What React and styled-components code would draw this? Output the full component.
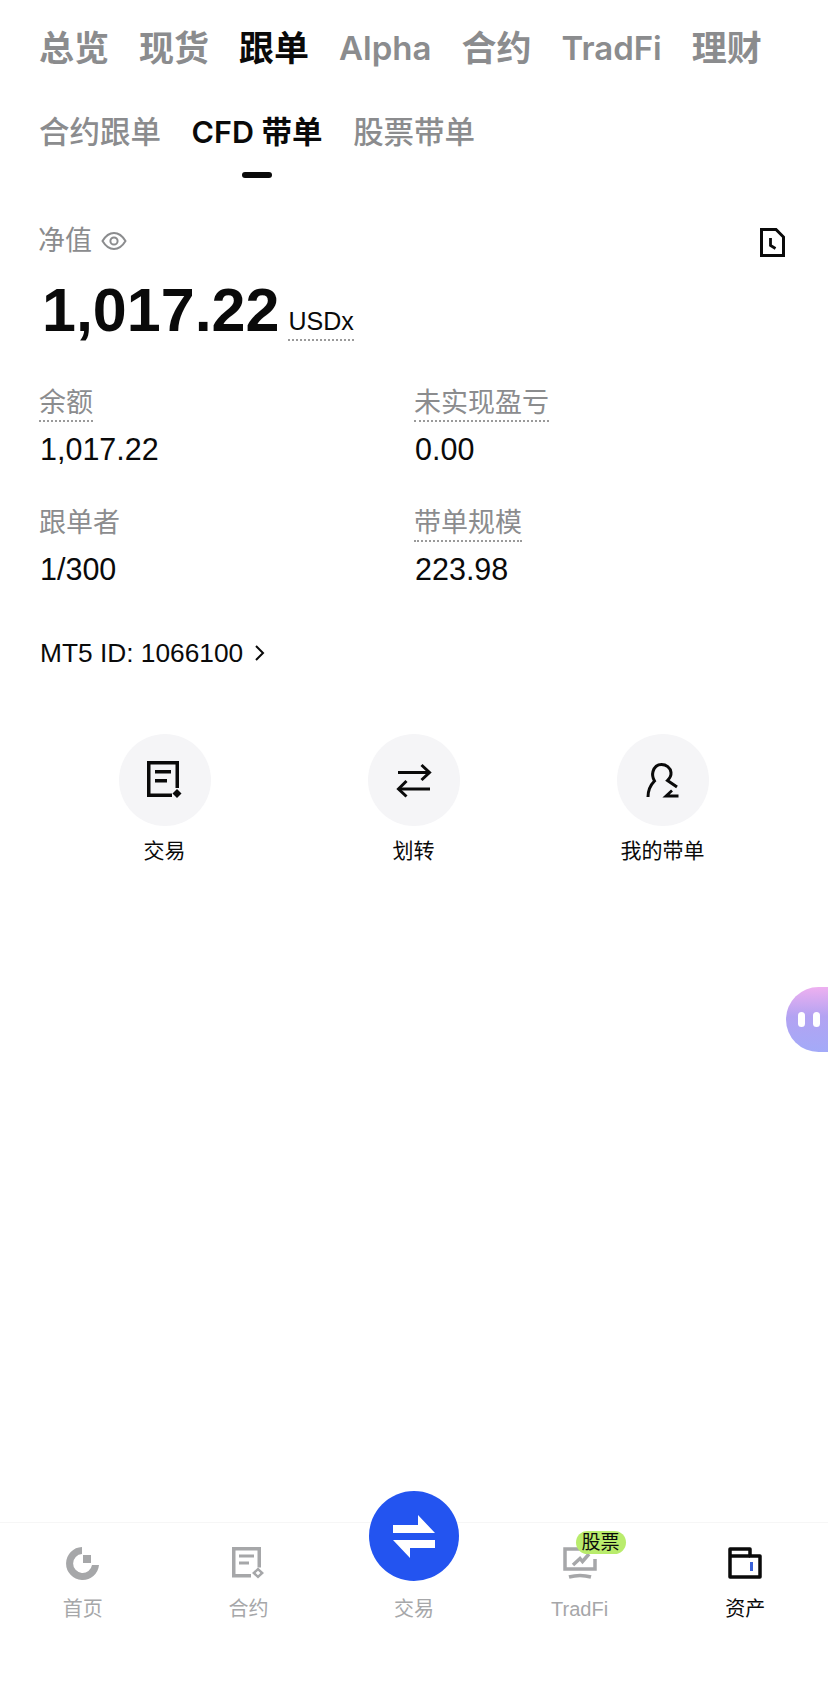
import React from 'react';
import styled, { createGlobalStyle } from 'styled-components';

const FONT = `"Liberation Sans", "Noto Sans CJK SC", sans-serif`;
const TAB_FONT = `Inter, "Noto Sans CJK SC", sans-serif`;

const GlobalStyle = createGlobalStyle`
  html, body {
    margin: 0;
    padding: 0;
    background: #fff;
    font-family: ${FONT};
  }
`;

const Page = styled.div`
  position: relative;
  width: 828px;
  height: 1687px;
  overflow: hidden;
  display: flex;
  flex-direction: column;
  background: #fff;
  color: #0a0a0a;
`;

const TopTabs = styled.div`
  display: flex;
  align-items: center;
  gap: 30px;
  height: 40px;
  padding: 28px 0 0 39px;
`;

const TopTab = styled.div`
  font-family: ${TAB_FONT};
  font-size: ${p => (p.$latin ? '33px' : '35px')};
  line-height: 40px;
  font-weight: 600;
  white-space: nowrap;
  color: ${p => (p.$active ? '#0a0a0a' : '#8b8c8e')};
`;

const SubTabs = styled.div`
  display: flex;
  gap: 30.5px;
  padding: 46px 0 0 39px;
`;

const SubTab = styled.div`
  position: relative;
  font-family: ${TAB_FONT};
  font-size: 30.5px;
  line-height: 36px;
  height: 64px;
  font-weight: ${p => (p.$active ? 600 : 500)};
  white-space: nowrap;
  color: ${p => (p.$active ? '#0a0a0a' : '#8b8c8e')};

  &::after {
    content: '';
    display: ${p => (p.$active ? 'block' : 'none')};
    position: absolute;
    left: 50%;
    bottom: 0;
    width: 30px;
    height: 6px;
    margin-left: -15px;
    border-radius: 3px;
    background: #0a0a0a;
  }
`;

const Summary = styled.section`
  padding: 48px 41px 0 40px;
`;

const EquityHead = styled.div`
  display: flex;
  align-items: center;
  justify-content: space-between;
  height: 32px;
  padding-right: 2px;
`;

const EquityLabel = styled.div`
  display: flex;
  align-items: center;
  gap: 9px;
  font-size: 27px;
  line-height: 30px;
  height: 30px;
  margin: -2px 0 0 -2px;
  color: #8b8c8e;
`;

const EquityRow = styled.div`
  display: flex;
  align-items: flex-end;
  gap: 9px;
  margin-top: 17px;
  padding-left: 2px;
`;

const EquityValue = styled.div`
  font-size: 61px;
  line-height: 70px;
  font-weight: 700;
`;

const Unit = styled.div`
  font-size: 25px;
  line-height: 29px;
  border-bottom: 2px dotted #9a9a9a;
  padding-bottom: 3px;
  margin-bottom: 4px;
`;

const StatGrid = styled.div`
  display: grid;
  grid-template-columns: 375px 1fr;
  row-gap: 39px;
  margin-top: 41px;
`;

const Stat = styled.div`
  display: flex;
  flex-direction: column;
  align-items: flex-start;
`;

const StatLabel = styled.div`
  font-size: 27px;
  line-height: 34px;
  margin-left: -1px;
  color: #8b8c8e;
  border-bottom: ${p => (p.$dotted ? '2px dotted #9a9a9a' : '2px solid transparent')};
`;

const StatValue = styled.div`
  font-size: 30.5px;
  line-height: 36px;
  margin-top: 9px;
`;

const AccountLink = styled.div`
  display: flex;
  align-items: center;
  gap: 11px;
  margin-top: 49px;
  font-size: 26.3px;
  line-height: 34px;
`;

const Actions = styled.div`
  display: grid;
  grid-template-columns: repeat(3, 249px);
  padding: 64px 0 0 40px;
`;

const Action = styled.div`
  display: flex;
  flex-direction: column;
  align-items: center;
`;

const ActionCircle = styled.div`
  width: 92px;
  height: 92px;
  border-radius: 50%;
  background: #f5f5f7;
  display: flex;
  align-items: center;
  justify-content: center;
`;

const ActionLabel = styled.div`
  margin-top: 11px;
  font-size: 21px;
  line-height: 28px;
`;

const BottomNav = styled.nav`
  display: grid;
  grid-template-columns: repeat(5, 1fr);
  margin-top: auto;
  height: 164px;
  border-top: 1px solid #f6f6f6;
`;

const NavItem = styled.div`
  display: flex;
  flex-direction: column;
  align-items: center;
  padding-top: 23px;
`;

const NavIcon = styled.div`
  position: relative;
  width: 36px;
  height: 34px;
  display: flex;
  align-items: center;
  justify-content: center;
`;

const NavLabel = styled.div`
  margin-top: 16px;
  font-size: 20px;
  line-height: 26px;
  color: ${p => (p.$active ? '#0a0a0a' : '#a6a7a9')};
`;

const TradeButton = styled.div`
  position: absolute;
  left: 50%;
  top: -55px;
  width: 90px;
  height: 90px;
  margin-left: -45px;
  border-radius: 50%;
  background: #2354f0;
  display: flex;
  align-items: center;
  justify-content: center;
`;

const Badge = styled.div`
  position: absolute;
  left: 14px;
  top: -15px;
  width: 50px;
  height: 23px;
  border-radius: 12px;
  background: #b9ec6c;
  color: #0a0a0a;
  font-size: 19px;
  line-height: 23px;
  text-align: center;
  white-space: nowrap;
`;

const Bubble = styled.div`
  position: absolute;
  right: 0;
  top: 987px;
  width: 42px;
  height: 65px;
  border-radius: 33px 0 0 33px;
  background: linear-gradient(180deg, #eeb0f0 0%, #b3a3f2 45%, #a3aaf8 100%);
  display: flex;
  align-items: center;
  gap: 8px;
  padding-left: 12px;
  box-sizing: border-box;
`;

const BubbleEye = styled.span`
  width: 7px;
  height: 15px;
  border-radius: 4px;
  background: #fff;
`;

const EyeIcon = () => (
  <svg width="26" height="20" viewBox="0 0 26 20" fill="none" stroke="#8b8c8e" strokeWidth="2">
    <path d="M1.500 10C4.500 5 8.500 2 13 2s8.500 3 11.500 8c-3 5-7 8-11.500 8S4.500 15 1.500 10Z" />
    <circle cx="13" cy="10" r="3.600" />
  </svg>
);

const HistoryIcon = () => (
  <svg width="25" height="29" viewBox="0 0 25 29" fill="none" stroke="#0a0a0a" strokeWidth="3">
    <path d="M1.500 1.500H16L23.500 9V27.500H1.500Z" />
    <path d="M10.500 10V17.500L15.500 20.500" strokeWidth="2.800" />
  </svg>
);

const Chevron = () => (
  <svg width="11" height="18" viewBox="0 0 11 18" fill="none" stroke="#0a0a0a" strokeWidth="2">
    <path d="M2 2L9 9L2 16" />
  </svg>
);

const OrderIcon = () => (
  <svg width="35" height="38" viewBox="0 0 35 38" fill="#0a0a0a">
    <path d="M0 0H32V27H28.500V3.500H3.500V32.500H25V36H0Z" />
    <rect x="8" y="9" width="16" height="3.500" />
    <rect x="8" y="18" width="12" height="3.500" />
    <path d="M30 28L34.500 32.500L30 37L25.500 32.500Z" />
  </svg>
);

const SwapIcon = () => (
  <svg width="36" height="35" viewBox="0 0 36 35" fill="none" stroke="#0a0a0a" strokeWidth="3">
    <path d="M2 9.500H33" />
    <path d="M25.500 2L33.500 9.500L25.500 17" />
    <path d="M34 26H3" />
    <path d="M10.500 18L2.500 26L10.500 33.500" />
  </svg>
);

const PersonIcon = () => (
  <svg width="33" height="35" viewBox="0 0 33 35" fill="none" stroke="#0a0a0a" strokeWidth="3">
    <path d="M2 34C2 27 4.500 22 8.500 18C6.500 14.500 6 12 7 8.500C8.500 3.500 12 1.500 15.500 1.500C20 1.500 24.500 4.500 25 9.500C25.300 12.500 24 15 21.500 17.500L31 24" />
    <path d="M26 27.500L20 33H32.500" strokeWidth="2.800" />
  </svg>
);

const HomeIcon = () => (
  <svg width="34" height="34" viewBox="0 0 34 34" fill="#a6a7a9">
    <path d="M16 1V8A9.500 9.500 0 1 0 26 19H33A16.500 16.500 0 1 1 16 1Z" />
    <rect x="17" y="9" width="8" height="8" />
  </svg>
);

const ContractIcon = () => (
  <svg width="34" height="34" viewBox="0 0 34 34" fill="#a6a7a9">
    <path d="M1 1H30V21.500H26.500V4.500H4.500V28H20V31.500H1Z" />
    <rect x="8" y="8.500" width="15" height="3" />
    <rect x="8" y="15.500" width="10" height="3" />
    <path d="M27 21.500L33 27L27 32.500L21 27ZM27 24.800L24.600 27L27 29.200L29.400 27Z" fillRule="evenodd" />
  </svg>
);

const TradeArrows = () => (
  <svg width="42" height="43" viewBox="0 0 42 43" fill="#fff">
    <path d="M0 10H25V0L42 18H0Z" />
    <path d="M0 25H42V33H17V43Z" />
  </svg>
);

const TradFiIcon = () => (
  <svg width="34" height="32" viewBox="0 0 34 32" fill="none" stroke="#a6a7a9" strokeWidth="3.500">
    <path d="M21 2H2V22H32V12" />
    <path d="M10 18L17 11.500L19.500 14.500L26 7" />
    <path d="M6 30C13 28 21 28 28 30" />
  </svg>
);

const WalletIcon = () => (
  <svg width="34" height="32" viewBox="0 0 34 32" fill="none">
    <path d="M2 30V2H22V9H32V30Z" stroke="#0a0a0a" strokeWidth="3.500" strokeLinejoin="round" />
    <path d="M2 9H22" stroke="#0a0a0a" strokeWidth="3.500" />
    <rect x="22" y="15" width="3" height="9" fill="#3a62d8" />
  </svg>
);

const topTabs = ['总览', '现货', '跟单', 'Alpha', '合约', 'TradFi', '理财'];
const latinTabs = ['Alpha', 'TradFi'];
const subTabs = ['合约跟单', 'CFD 带单', '股票带单'];

const stats = [
  { label: '余额', value: '1,017.22', dotted: true },
  { label: '未实现盈亏', value: '0.00', dotted: true },
  { label: '跟单者', value: '1/300' },
  { label: '带单规模', value: '223.98', dotted: true },
];

const actions = [
  { label: '交易', icon: <OrderIcon /> },
  { label: '划转', icon: <SwapIcon /> },
  { label: '我的带单', icon: <PersonIcon /> },
];

export default function App() {
  return (
    <Page>
      <GlobalStyle />
      <TopTabs>
        {topTabs.map(t => (
          <TopTab key={t} $active={t === '跟单'} $latin={latinTabs.includes(t)}>{t}</TopTab>
        ))}
      </TopTabs>
      <SubTabs>
        {subTabs.map(t => (
          <SubTab key={t} $active={t === 'CFD 带单'}>{t}</SubTab>
        ))}
      </SubTabs>

      <Summary>
        <EquityHead>
          <EquityLabel>净值 <EyeIcon /></EquityLabel>
          <HistoryIcon />
        </EquityHead>
        <EquityRow>
          <EquityValue>1,017.22</EquityValue>
          <Unit>USDx</Unit>
        </EquityRow>
        <StatGrid>
          {stats.map(s => (
            <Stat key={s.label}>
              <StatLabel $dotted={s.dotted}>{s.label}</StatLabel>
              <StatValue>{s.value}</StatValue>
            </Stat>
          ))}
        </StatGrid>
        <AccountLink>MT5 ID: 1066100 <Chevron /></AccountLink>
      </Summary>

      <Actions>
        {actions.map(a => (
          <Action key={a.label}>
            <ActionCircle>{a.icon}</ActionCircle>
            <ActionLabel>{a.label}</ActionLabel>
          </Action>
        ))}
      </Actions>

      <BottomNav>
        <NavItem>
          <NavIcon><HomeIcon /></NavIcon>
          <NavLabel>首页</NavLabel>
        </NavItem>
        <NavItem>
          <NavIcon><ContractIcon /></NavIcon>
          <NavLabel>合约</NavLabel>
        </NavItem>
        <NavItem>
          <NavIcon>
            <TradeButton><TradeArrows /></TradeButton>
          </NavIcon>
          <NavLabel>交易</NavLabel>
        </NavItem>
        <NavItem>
          <NavIcon>
            <TradFiIcon />
            <Badge>股票</Badge>
          </NavIcon>
          <NavLabel>TradFi</NavLabel>
        </NavItem>
        <NavItem>
          <NavIcon><WalletIcon /></NavIcon>
          <NavLabel $active>资产</NavLabel>
        </NavItem>
      </BottomNav>

      <Bubble>
        <BubbleEye />
        <BubbleEye />
      </Bubble>
    </Page>
  );
}
